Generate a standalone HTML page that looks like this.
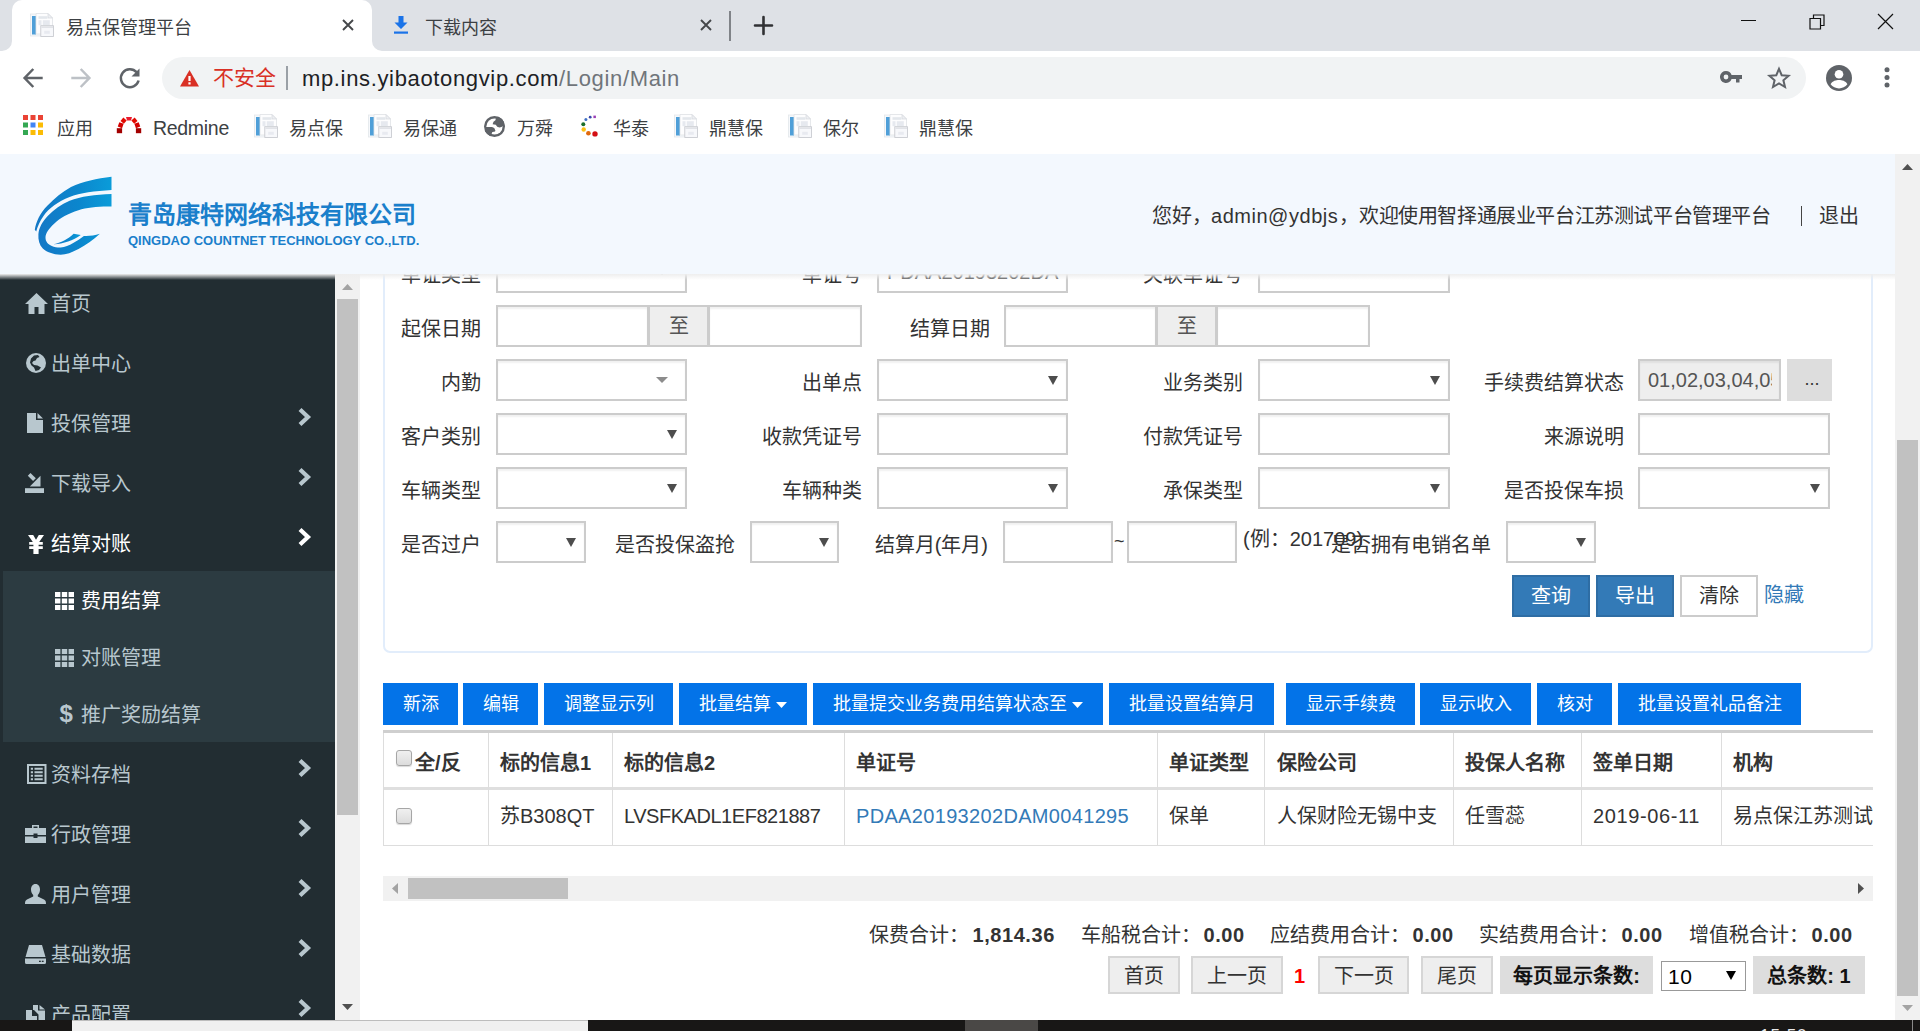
<!DOCTYPE html>
<html lang="zh-CN">
<head>
<meta charset="utf-8">
<title>易点保管理平台</title>
<style>
*{box-sizing:border-box;margin:0;padding:0}
html,body{width:1920px;height:1031px;overflow:hidden;background:#fff}
body{position:relative;font-family:"Liberation Sans",sans-serif;color:#333;font-size:20px}
.a{position:absolute;white-space:nowrap;line-height:1}
.t{position:absolute;white-space:nowrap;line-height:24px;height:24px}
svg{position:absolute;overflow:visible}
/* browser chrome */
#tabbar{left:0;top:0;width:1920px;height:51px;background:#dee1e6}
#tab1{left:12px;top:0;width:360px;height:51px;background:#fff;border-radius:10px 10px 0 0}
.tabtxt{font-size:18px;color:#3c4043;top:15.5px}
#toolbar{left:0;top:51px;width:1920px;height:53px;background:#fff}
#pill{left:162px;top:57px;width:1644px;height:42px;border-radius:21px;background:#f1f3f4}
#bm{left:0;top:104px;width:1920px;height:50px;background:#fff}
.bmt{font-size:18px;color:#3c4043;top:116.5px}
/* page */
#hdr{left:0;top:154px;width:1895px;height:120px;background:#f3f8fe;z-index:5}
#hsh{left:0;top:274px;width:1895px;height:6px;background:linear-gradient(rgba(238,238,238,1),rgba(238,238,238,.55) 45%,rgba(238,238,238,0));z-index:6}
#side{left:0;top:274px;width:335px;height:746px;background:#222d32;overflow:hidden}
#sub{left:3px;top:297px;width:332px;height:171px;background:#2c3b41}
.mi{font-size:20px;color:#b8c7ce;left:51px}
.mi.w{color:#fff}
.si{font-size:20px;color:#b8c7ce;left:81px}
.si.w{color:#fff}
#sscroll{left:335px;top:274px;width:25px;height:746px;background:#f1f1f1}
#mscroll{left:1895px;top:154px;width:25px;height:866px;background:#f1f1f1}
#content{left:360px;top:274px;width:1535px;height:746px;background:#fff;overflow:hidden}
.lb{color:#333}
.b{font-weight:bold}
#task{left:0;top:1020px;width:1920px;height:11px;background:#181716}
</style>
</head>
<body>
<!-- ============ TAB BAR ============ -->
<div class="a" id="tabbar"></div>
<div class="a" id="tab1"></div>
<!-- inverse corners of active tab -->
<svg style="left:2px;top:41px" width="10" height="10"><path d="M10 0V10H0A10 10 0 0 0 10 0Z" fill="#fff"/></svg>
<svg style="left:372px;top:41px" width="10" height="10"><path d="M0 0V10H10A10 10 0 0 1 0 0Z" fill="#fff"/></svg>
<svg class="fav" style="left:30px;top:13px" width="24" height="24" viewBox="0 0 24 24"><use href="#favicon"/></svg>
<div class="a tabtxt" style="left:66px;line-height:24px">易点保管理平台</div>
<svg style="left:342px;top:19px" width="12" height="12" viewBox="0 0 12 12"><path d="M1 1L11 11M11 1L1 11" stroke="#45474a" stroke-width="1.9" fill="none"/></svg>
<svg style="left:394px;top:16px" width="14" height="18" viewBox="0 0 14 18"><path d="M4.5 0H9.5V6.5H13.5L7 13L.5 6.5H4.5Z" fill="#1a73e8"/><rect x="0" y="15.5" width="14" height="2.2" fill="#1a73e8"/></svg>
<div class="a tabtxt" style="left:425px;line-height:24px">下载内容</div>
<svg style="left:700px;top:19px" width="12" height="12" viewBox="0 0 12 12"><path d="M1 1L11 11M11 1L1 11" stroke="#45474a" stroke-width="1.9" fill="none"/></svg>
<div class="a" style="left:729px;top:11px;width:1.5px;height:30px;background:#808388"></div>
<svg style="left:754px;top:16px" width="19" height="19" viewBox="0 0 19 19"><path d="M9.5 1V18M1 9.5H18" stroke="#303134" stroke-width="2.6" stroke-linecap="round" fill="none"/></svg>
<!-- window controls -->
<div class="a" style="left:1741px;top:20px;width:15px;height:1px;background:#111"></div>
<svg style="left:1808.5px;top:13.5px" width="16" height="16" viewBox="0 0 16 16"><path d="M1 4.500H11.500V15H1ZM4.500 4.500V1H15V11.500H11.500" stroke="#111" stroke-width="1.200" fill="none"/></svg>
<svg style="left:1878px;top:14px" width="15" height="15" viewBox="0 0 15 15"><path d="M0 0L15 15M15 0L0 15" stroke="#111" stroke-width="1.200" fill="none"/></svg>

<!-- ============ TOOLBAR ============ -->
<div class="a" id="toolbar"></div>
<div class="a" id="pill"></div>
<svg style="left:23px;top:68px" width="20" height="20" viewBox="0 0 20 20"><path d="M19.7 10H2.5M10.3 1L1.6 10L10.3 19" stroke="#5f6368" stroke-width="2.5" fill="none"/></svg>
<svg style="left:71px;top:68px" width="20" height="20" viewBox="0 0 20 20"><path d="M.3 10H17.5M9.7 1L18.4 10L9.700 19" stroke="#bdc1c6" stroke-width="2.5" fill="none"/></svg>
<svg style="left:119px;top:67px" width="22" height="22" viewBox="0 0 22 22"><path d="M17.6 5.2A9 9 0 1 0 19.6 13.5" stroke="#5f6368" stroke-width="2.5" fill="none"/><path d="M20.5 1.5V9.5H12.5Z" fill="#5f6368"/></svg>
<svg style="left:180px;top:70px" width="19" height="17" viewBox="0 0 19 17"><path d="M9.5 0L19 16.5H0Z" fill="#d93025"/><rect x="8.4" y="6" width="2.2" height="5" fill="#fff"/><rect x="8.4" y="12.3" width="2.2" height="2.2" fill="#fff"/></svg>
<div class="a" style="left:213px;top:65px;line-height:26px;font-size:21px;color:#d93025">不安全</div>
<div class="a" style="left:286px;top:66px;width:1.6px;height:24px;background:#9aa0a6"></div>
<div class="a" id="url" style="left:302px;top:65px;line-height:28px;font-size:22px;letter-spacing:.65px;color:#202124">mp.ins.yibaotongvip.com<span style="color:#70757a">/Login/Main</span></div>
<!-- key -->
<svg style="left:1720px;top:71px" width="22" height="12" viewBox="0 0 22 12"><path d="M6 0A6 6 0 1 0 11.6 8H16V11.5H19.5V8H22V4H11.6A6 6 0 0 0 6 0ZM6 3.6A2.4 2.4 0 1 1 6 8.4A2.4 2.4 0 0 1 6 3.6Z" fill="#5f6368" fill-rule="evenodd"/></svg>
<!-- star -->
<svg style="left:1768px;top:67px" width="22" height="21" viewBox="0 0 22 21"><path d="M11 1.8L13.7 8.2L20.6 8.8L15.4 13.3L17 20L11 16.4L5 20L6.6 13.3L1.4 8.8L8.3 8.2Z" stroke="#5f6368" stroke-width="2" fill="none" stroke-linejoin="miter"/></svg>
<!-- avatar -->
<svg style="left:1826px;top:64.5px" width="26" height="26" viewBox="0 0 26 26"><circle cx="13" cy="13" r="13" fill="#5f6368"/><circle cx="13" cy="9.3" r="4.3" fill="#fff"/><path d="M4.6 19.2C6.5 15.8 10 15 13 15S19.5 15.8 21.4 19.2A10.5 10.5 0 0 1 4.6 19.2Z" fill="#fff"/></svg>
<svg style="left:1884px;top:67px" width="6" height="21" viewBox="0 0 6 21"><circle cx="3" cy="2.8" r="2.5" fill="#5f6368"/><circle cx="3" cy="10.4" r="2.5" fill="#5f6368"/><circle cx="3" cy="18" r="2.5" fill="#5f6368"/></svg>

<!-- ============ BOOKMARKS ============ -->
<div class="a" id="bm"></div>
<svg style="left:23px;top:115px" width="20" height="20" viewBox="0 0 20 20">
<rect x="0" y="0" width="5" height="5" fill="#ea4335"/><rect x="7.5" y="0" width="5" height="5" fill="#ea4335"/><rect x="15" y="0" width="5" height="5" fill="#ea4335"/>
<rect x="0" y="7.5" width="5" height="5" fill="#34a853"/><rect x="7.5" y="7.5" width="5" height="5" fill="#4285f4"/><rect x="15" y="7.5" width="5" height="5" fill="#fbbc05"/>
<rect x="0" y="15" width="5" height="5" fill="#34a853"/><rect x="7.5" y="15" width="5" height="5" fill="#fbbc05"/><rect x="15" y="15" width="5" height="5" fill="#fbbc05"/></svg>
<div class="a bmt" style="left:57px;line-height:24px">应用</div>
<svg style="left:116px;top:116px" width="26" height="18" viewBox="0 0 26 18">
<rect x=".8" y="12.200" width="5.300" height="5" fill="#a30000"/><rect x="19.900" y="12.200" width="5.300" height="5" fill="#a30000"/>
<rect x="-2.300" y="-2.300" width="4.600" height="4.600" fill="#d40000" transform="translate(4.700 9.200) rotate(20)"/><rect x="-2.300" y="-2.300" width="4.600" height="4.600" fill="#d40000" transform="translate(21.300 9.200) rotate(-20)"/>
<rect x="-2.200" y="-2.200" width="4.400" height="4.400" fill="#e10a00" transform="translate(7.600 4.700) rotate(40)"/><rect x="-2.200" y="-2.200" width="4.400" height="4.400" fill="#e10a00" transform="translate(18.400 4.700) rotate(-40)"/>
<path d="M10 1.100H16L15 4.600H11Z" fill="#ea1a2d"/></svg>
<div class="a bmt" style="left:153px;top:116px;line-height:24px;font-size:19.5px;letter-spacing:-.3px">Redmine</div>
<svg style="left:254px;top:114px" width="24" height="24" viewBox="0 0 24 24"><use href="#favicon"/></svg>
<div class="a bmt" style="left:289px;line-height:24px">易点保</div>
<svg style="left:368px;top:114px" width="24" height="24" viewBox="0 0 24 24"><use href="#favicon"/></svg>
<div class="a bmt" style="left:403px;line-height:24px">易保通</div>
<svg style="left:483.700px;top:115.500px" width="21" height="21" viewBox="0 0 21 21"><defs><clipPath id="gc"><circle cx="10.500" cy="10.500" r="10.500"/></clipPath></defs><circle cx="10.500" cy="10.500" r="10.500" fill="#5f6368"/><circle cx="10.500" cy="10.500" r="8.100" fill="#fff"/><g clip-path="url(#gc)" fill="#5f6368"><path d="M12.200 1.500L11.400 4.300Q9 5.400 8.600 8.300L11.800 8.800Q12.800 11.400 15.500 11.400Q17.600 11.300 19 10L21 10.500L19.500 3L14 .5Z"/><path d="M1 11H8Q10.800 11.400 11.400 14.400Q11.400 15.600 10 15.700L8.300 16Q7.300 17.500 7.800 19.500L6 20.500L1 16Z"/></g></svg>
<div class="a bmt" style="left:517px;line-height:24px">万舜</div>
<svg style="left:579px;top:115px" width="20" height="22" viewBox="0 0 20 22"><rect x="14.400" y=".6" width="2.500" height="2.500" fill="#9b3fb5"/><circle cx="11.200" cy="2.200" r="1.400" fill="#3949ab"/><circle cx="6.900" cy="4.400" r="1.500" fill="#3f6fc4"/><circle cx="4.300" cy="9.200" r="2" fill="#1b6e2c"/><circle cx="4.700" cy="14.500" r="2.200" fill="#fbc117"/><circle cx="9.400" cy="18.200" r="2.300" fill="#e0690c"/><circle cx="16" cy="18.900" r="2.700" fill="#d40f14"/></svg>
<div class="a bmt" style="left:613px;line-height:24px">华泰</div>
<svg style="left:674px;top:114px" width="24" height="24" viewBox="0 0 24 24"><use href="#favicon"/></svg>
<div class="a bmt" style="left:709px;line-height:24px">鼎慧保</div>
<svg style="left:788px;top:114px" width="24" height="24" viewBox="0 0 24 24"><use href="#favicon"/></svg>
<div class="a bmt" style="left:823px;line-height:24px">保尔</div>
<svg style="left:884px;top:114px" width="24" height="24" viewBox="0 0 24 24"><use href="#favicon"/></svg>
<div class="a bmt" style="left:919px;line-height:24px">鼎慧保</div>

<!-- favicon symbol -->
<svg width="0" height="0" style="left:-100px;top:-100px"><defs><g id="favicon">
<rect x="0.5" y="1" width="16" height="22" fill="#f6f8fb" stroke="#e3e6ea" stroke-width=".8"/>
<rect x="2" y="3" width="4" height="18.5" fill="#4f9fd8"/>
<path d="M6 0.5H18L22.5 5V21H6Z" fill="#fdfdfe" stroke="#dfe2e6" stroke-width=".8"/>
<path d="M18 0.5V5H22.5Z" fill="#eef0f3" stroke="#d4d7dc" stroke-width=".7"/>
<rect x="8.5" y="3.2" width="9" height="2.6" fill="#e3e7ec"/>
<rect x="8.5" y="7.2" width="3" height="5" fill="#e6e9ef"/><rect x="12.8" y="7.2" width="7" height="5" fill="#e6e9ef"/>
<rect x="10.8" y="12.7" width="12.7" height="10.8" fill="#f7f8fb" stroke="#c6c8ce" stroke-width=".85"/>
<rect x="11.3" y="13.2" width="11.7" height="1.8" fill="#e1e3e8"/>
<rect x="14.2" y="17.8" width="5.6" height="3" fill="#e8eaf0"/>
</g></defs></svg>

<!-- ============ PAGE HEADER ============ -->
<div class="a" id="hdr">
<svg style="left:25px;top:16px" width="100" height="92" viewBox="0 0 100 92">
<defs><linearGradient id="lg" x1="0" y1="0" x2="1" y2="0"><stop offset="0" stop-color="#1478c6"/><stop offset=".55" stop-color="#0b86cd"/><stop offset="1" stop-color="#0a9cd9"/></linearGradient></defs>
<path d="M86.5 6.7V20.1C70 21 55 23 44.6 27C33 31.500 24 38 18.500 46C15 51 12.500 56.500 11.200 61.500L9.800 59.800C11 52 15 43 22.300 35.700C30 28 37 22 46 17C58 11.500 72 8.500 86.500 6.700Z" fill="url(#lg)"/>
<path d="M86.5 24.100V36.600C74 36.300 62 37.500 53.500 40.300C43 43.500 35 48 29.400 53.500C24 58.500 20.500 63 20.500 67.800C20.500 71.500 23 74.500 26.800 76C29.500 77.200 32.500 77.700 35.700 77.600C40 77.300 44 75.500 48.200 73.100C52 71 55.500 68.500 58.900 66C64 66.300 69.500 65.500 74.900 63.800C68 70 61 75 53.500 79C47 82.500 41 84.700 35.700 84.700C28 84.500 21.500 82 17.800 78.500C14.500 75 13 70 13.400 64.200C14 57.500 17.500 51.500 23.200 45.500C29 39.500 36 34.500 44.600 30.800C56 26.500 70 24.600 86.500 24.100Z" fill="url(#lg)"/>
<path d="M48.600 63.800L55.800 65.100C48 70.500 39 74 28.100 74.300C36 73 43 69 48.600 63.800Z" fill="url(#lg)"/>
</svg>
<div class="a" style="left:128px;top:46px;line-height:30px;font-size:24px;font-weight:bold;color:#1a7fcb;letter-spacing:0">青岛康特网络科技有限公司</div>
<div class="a" id="eng" style="left:128px;top:79px;line-height:16px;font-size:13px;font-weight:bold;color:#1a7fcb">QINGDAO COUNTNET TECHNOLOGY CO.,LTD.</div>
<div class="a" style="left:1152px;top:50px;line-height:24px;font-size:20px;color:#333">您好，</div>
<div class="a" id="adm" style="left:1211px;top:50px;line-height:24px;font-size:20px;letter-spacing:.53px;color:#333">admin@ydbjs</div>
<div class="a" style="left:1339px;top:50px;line-height:24px;font-size:20px;color:#333">，</div><div class="a" style="left:1359px;top:50px;line-height:24px;font-size:20px;color:#333;letter-spacing:-.4px">欢迎使用智择通展业平台江苏测试平台管理平台</div>
<div class="a" style="left:1801px;top:52px;width:1px;height:20px;background:#444"></div>
<div class="a" style="left:1819px;top:50px;line-height:24px;font-size:20px;color:#333">退出</div>
</div>
<div class="a" id="side"><svg style="left:25px;top:29px;margin-top:-10px" width="23" height="21" viewBox="0 0 23 21"><path d="M11.500 0L23 11H19.500V21H13.500V14H9.500V21H3.500V11H0Z" fill="#b8c7ce"/></svg><div class="a mi" style="top:18px;line-height:24px">首页</div><svg style="left:25.500px;top:89px;margin-top:-10px" width="20" height="20" viewBox="0 0 20 20"><circle cx="10" cy="10" r="10" fill="#b8c7ce"/><path d="M8 2.500L12 2L13.500 4L11 5L9.500 7.500L7.500 8L6 10L8 12L11.500 12.500L15 14.500L13 17L9.500 18L8 14.500L5.500 12.500L4 9.500L5 5.500Z" fill="#222d32"/></svg><div class="a mi" style="top:78px;line-height:24px">出单中心</div><svg style="left:27px;top:149px;margin-top:-10px" width="16" height="20" viewBox="0 0 16 20"><path d="M0 0H9V7H16V20H0Z" fill="#b8c7ce"/><path d="M10.500 0L16 5.500H10.500Z" fill="#b8c7ce"/></svg><div class="a mi" style="top:138px;line-height:24px">投保管理</div><svg style="left:297px;top:134px" width="14" height="18" viewBox="0 0 14 18"><path d="M3 1.500L11 9L3 16.500" stroke="#b8c7ce" stroke-width="4.200" fill="none"/></svg><svg style="left:25px;top:209px;margin-top:-10px" width="19" height="20" viewBox="0 0 19 20"><path d="M0 15.200H19V20H0Z" fill="#b8c7ce"/><path d="M2.800 2.700L5.500 0L10.800 5.300L8.100 8Z" fill="#b8c7ce"/><path d="M15.500 2.800V13.500H4.800Z" fill="#b8c7ce"/></svg><div class="a mi" style="top:198px;line-height:24px">下载导入</div><svg style="left:297px;top:194px" width="14" height="18" viewBox="0 0 14 18"><path d="M3 1.500L11 9L3 16.500" stroke="#b8c7ce" stroke-width="4.200" fill="none"/></svg><div class="a" id="sub"></div><svg style="left:27.500px;top:269px;margin-top:-8px" width="16" height="19" viewBox="0 0 16 19"><path d="M0 0H5.200L8 4.800L10.800 0H16L11.200 7H14.800V9.800H10.600V11.200H14.800V14H10.600V19H5.400V14H1.200V11.200H5.400V9.800H1.200V7H4.800Z" fill="#fff"/></svg><div class="a mi w" style="top:258px;line-height:24px">结算对账</div><svg style="left:297px;top:254px" width="14" height="18" viewBox="0 0 14 18"><path d="M3 1.500L11 9L3 16.500" stroke="#fff" stroke-width="4.200" fill="none"/></svg><svg style="left:55px;top:327px;margin-top:-9px" width="19" height="18" viewBox="0 0 19 18"><path d="M0 0H5.400V5H0ZM6.800 0H12.200V5H6.800ZM13.600 0H19V5H13.600ZM0 6.500H5.400V11.500H0ZM6.800 6.500H12.200V11.500H6.800ZM13.600 6.500H19V11.500H13.600ZM0 13H5.400V18H0ZM6.800 13H12.200V18H6.800ZM13.600 13H19V18H13.600Z" fill="#fff"/></svg><div class="a si w" style="top:315px;line-height:24px">费用结算</div><svg style="left:55px;top:384px;margin-top:-9px" width="19" height="18" viewBox="0 0 19 18"><path d="M0 0H5.400V5H0ZM6.800 0H12.200V5H6.800ZM13.600 0H19V5H13.600ZM0 6.500H5.400V11.500H0ZM6.800 6.500H12.200V11.500H6.800ZM13.600 6.500H19V11.500H13.600ZM0 13H5.400V18H0ZM6.800 13H12.200V18H6.800ZM13.600 13H19V18H13.600Z" fill="#b8c7ce"/></svg><div class="a si" style="top:372px;line-height:24px">对账管理</div><div class="a" style="left:59.500px;top:440px;margin-top:-12px;line-height:24px;font-size:24px;font-weight:bold;color:#b8c7ce">$</div><div class="a si" style="top:429px;line-height:24px">推广奖励结算</div><svg style="left:26.500px;top:500px;margin-top:-10px" width="19.500" height="20" viewBox="0 0 19.500 20"><path d="M0 0H19.500V20H0ZM2 2V18H17.500V2Z" fill="#b8c7ce" fill-rule="evenodd"/><path d="M3.800 3.800H6V5.800H3.800ZM7.500 3.800H15.700V5.800H7.500ZM3.800 7.300H6V9.300H3.800ZM7.500 7.300H15.700V9.300H7.500ZM3.800 10.800H6V12.800H3.800ZM7.500 10.800H15.700V12.800H7.500ZM3.800 14.300H6V16.300H3.800ZM7.500 14.300H15.700V16.300H7.500Z" fill="#b8c7ce"/></svg><div class="a mi" style="top:489px;line-height:24px">资料存档</div><svg style="left:297px;top:485px" width="14" height="18" viewBox="0 0 14 18"><path d="M3 1.500L11 9L3 16.500" stroke="#b8c7ce" stroke-width="4.200" fill="none"/></svg><svg style="left:25px;top:560px;margin-top:-9px" width="21" height="18" viewBox="0 0 21 18"><path d="M7 0H14V3H21V10H12.500V8.500H8.500V10H0V3H7ZM8.500 1.500V3H12.500V1.500ZM0 11.500H8.500V13H12.500V11.500H21V18H0Z" fill="#b8c7ce" fill-rule="evenodd"/></svg><div class="a mi" style="top:549px;line-height:24px">行政管理</div><svg style="left:297px;top:545px" width="14" height="18" viewBox="0 0 14 18"><path d="M3 1.500L11 9L3 16.500" stroke="#b8c7ce" stroke-width="4.200" fill="none"/></svg><svg style="left:25px;top:620px;margin-top:-10px" width="21" height="20" viewBox="0 0 21 20"><path d="M10.500 0C13.500 0 15 2.500 15 5.500C15 8 14 10 12.800 11V12.500L19 15.500C20.500 16.300 21 17.500 21 20H0C0 17.500 0.500 16.300 2 15.500L8.200 12.500V11C7 10 6 8 6 5.500C6 2.500 7.500 0 10.500 0Z" fill="#b8c7ce"/></svg><div class="a mi" style="top:609px;line-height:24px">用户管理</div><svg style="left:297px;top:605px" width="14" height="18" viewBox="0 0 14 18"><path d="M3 1.500L11 9L3 16.500" stroke="#b8c7ce" stroke-width="4.200" fill="none"/></svg><svg style="left:25px;top:680px;margin-top:-9px" width="21" height="19" viewBox="0 0 21 19"><path d="M4 0H17L20.500 12H0.500ZM0 13.500H21V17.500A1.500 1.500 0 0 1 19.500 19H1.500A1.500 1.500 0 0 1 0 17.500Z" fill="#b8c7ce"/><rect x="14" y="15.700" width="1.800" height="1.300" fill="#222d32"/><rect x="16.800" y="15.700" width="1.800" height="1.300" fill="#222d32"/></svg><div class="a mi" style="top:669px;line-height:24px">基础数据</div><svg style="left:297px;top:665px" width="14" height="18" viewBox="0 0 14 18"><path d="M3 1.500L11 9L3 16.500" stroke="#b8c7ce" stroke-width="4.200" fill="none"/></svg><svg style="left:26px;top:740px;margin-top:-9px" width="19" height="20" viewBox="0 0 19 20"><path d="M0 5H6V11H11V20H0ZM7 0H12V5.500H19V16H12.500V9.500L8 5L7 5ZM13.500 0L19 4.500H13.500Z" fill="#b8c7ce"/></svg><div class="a mi" style="top:729px;line-height:24px">产品配置</div><svg style="left:297px;top:725px" width="14" height="18" viewBox="0 0 14 18"><path d="M3 1.500L11 9L3 16.500" stroke="#b8c7ce" stroke-width="4.200" fill="none"/></svg></div>
<div class="a" id="sscroll">
<svg style="left:7px;top:10px" width="11" height="6"><path d="M0 6L5.500 0L11 6Z" fill="#a3a3a3"/></svg>
<div class="a" style="left:2px;top:25px;width:21px;height:516px;background:#c1c1c1"></div>
<svg style="left:7px;top:730px" width="11" height="6"><path d="M0 0L5.500 6L11 0Z" fill="#505050"/></svg>
</div>
<div class="a" id="content">
<div class="a" style="left:23px;top:-49px;width:1490px;height:428px;border:2px solid #e2edfb;border-radius:7px;background:#fff"></div>
<div class="t lb" style="right:1414px;top:-11.5px;">单证类型</div>
<div class="a" style="left:136px;top:-23px;width:191px;height:42px;border:2px solid #ccc;background:#fff;box-shadow:inset 0 2px 2px rgba(0,0,0,.06);"></div>
<svg style="left:296px;top:-5px" width="12" height="6"><path d="M0 0H12L6 6Z" fill="#8c8c8c"/></svg>
<div class="t lb" style="right:1033px;top:-11.5px;">单证号</div>
<div class="a" style="left:517px;top:-23px;width:191px;height:42px;border:2px solid #ccc;background:#fff;box-shadow:inset 0 2px 2px rgba(0,0,0,.06);"></div>
<div class="t lat" style="left:527px;top:-14px;color:#555">PDAA20193202DA</div>
<div class="t lb" style="right:652px;top:-11.5px;">关联单证号</div>
<div class="a" style="left:898px;top:-23px;width:192px;height:42px;border:2px solid #ccc;background:#fff;box-shadow:inset 0 2px 2px rgba(0,0,0,.06);"></div>
<div class="t lb" style="right:1414px;top:42.5px;">起保日期</div>
<div class="a" style="left:136px;top:31px;width:153px;height:42px;border:2px solid #ccc;background:#fff;box-shadow:inset 0 2px 2px rgba(0,0,0,.06);"></div>
<div class="a" style="left:288px;top:31px;width:61px;height:42px;border:2px solid #ccc;background:#eee"></div>
<div class="t " style="left:309px;top:40px;color:#555">至</div>
<div class="a" style="left:348px;top:31px;width:154px;height:42px;border:2px solid #ccc;background:#fff;box-shadow:inset 0 2px 2px rgba(0,0,0,.06);"></div>
<div class="t lb" style="right:905px;top:42.5px;">结算日期</div>
<div class="a" style="left:644px;top:31px;width:153px;height:42px;border:2px solid #ccc;background:#fff;box-shadow:inset 0 2px 2px rgba(0,0,0,.06);"></div>
<div class="a" style="left:796px;top:31px;width:61px;height:42px;border:2px solid #ccc;background:#eee"></div>
<div class="t " style="left:817px;top:40px;color:#555">至</div>
<div class="a" style="left:856px;top:31px;width:154px;height:42px;border:2px solid #ccc;background:#fff;box-shadow:inset 0 2px 2px rgba(0,0,0,.06);"></div>
<div class="t lb" style="right:1414px;top:96.5px;">内勤</div>
<div class="a" style="left:136px;top:85px;width:191px;height:42px;border:2px solid #ccc;background:#fff;box-shadow:inset 0 2px 2px rgba(0,0,0,.06);"></div>
<svg style="left:296px;top:103px" width="12" height="6"><path d="M0 0H12L6 6Z" fill="#8c8c8c"/></svg>
<div class="t lb" style="right:1033px;top:96.5px;">出单点</div>
<div class="a" style="left:517px;top:85px;width:191px;height:42px;border:2px solid #ccc;background:#fff;box-shadow:inset 0 2px 2px rgba(0,0,0,.06);"></div>
<svg style="left:688px;top:102px" width="10" height="9"><path d="M0 0H10L5 9Z" fill="#4d4d4d"/></svg>
<div class="t lb" style="right:652px;top:96.5px;">业务类别</div>
<div class="a" style="left:898px;top:85px;width:192px;height:42px;border:2px solid #ccc;background:#fff;box-shadow:inset 0 2px 2px rgba(0,0,0,.06);"></div>
<svg style="left:1070px;top:102px" width="10" height="9"><path d="M0 0H10L5 9Z" fill="#4d4d4d"/></svg>
<div class="t lb" style="right:271px;top:96.5px;">手续费结算状态</div>
<div class="a" style="left:1278px;top:85px;width:143px;height:42px;border:2px solid #ccc;background:#fff;box-shadow:inset 0 2px 2px rgba(0,0,0,.06);background:#eee;overflow:hidden"></div>
<div class="t lat" id="feeval" style="left:1288px;top:94px;color:#555;width:124px;overflow:hidden">01,02,03,04,05</div>
<div class="a" style="left:1427px;top:85px;width:45px;height:42px;background:#ddd"></div>
<div class="t " style="left:1444.5px;top:93px;color:#333;font-size:18px">...</div>
<div class="t lb" style="right:1414px;top:150.5px;">客户类别</div>
<div class="a" style="left:136px;top:139px;width:191px;height:42px;border:2px solid #ccc;background:#fff;box-shadow:inset 0 2px 2px rgba(0,0,0,.06);"></div>
<svg style="left:307px;top:156px" width="10" height="9"><path d="M0 0H10L5 9Z" fill="#4d4d4d"/></svg>
<div class="t lb" style="right:1033px;top:150.5px;">收款凭证号</div>
<div class="a" style="left:517px;top:139px;width:191px;height:42px;border:2px solid #ccc;background:#fff;box-shadow:inset 0 2px 2px rgba(0,0,0,.06);"></div>
<div class="t lb" style="right:652px;top:150.5px;">付款凭证号</div>
<div class="a" style="left:898px;top:139px;width:192px;height:42px;border:2px solid #ccc;background:#fff;box-shadow:inset 0 2px 2px rgba(0,0,0,.06);"></div>
<div class="t lb" style="right:271px;top:150.5px;">来源说明</div>
<div class="a" style="left:1278px;top:139px;width:192px;height:42px;border:2px solid #ccc;background:#fff;box-shadow:inset 0 2px 2px rgba(0,0,0,.06);"></div>
<div class="t lb" style="right:1414px;top:204.5px;">车辆类型</div>
<div class="a" style="left:136px;top:193px;width:191px;height:42px;border:2px solid #ccc;background:#fff;box-shadow:inset 0 2px 2px rgba(0,0,0,.06);"></div>
<svg style="left:307px;top:210px" width="10" height="9"><path d="M0 0H10L5 9Z" fill="#4d4d4d"/></svg>
<div class="t lb" style="right:1033px;top:204.5px;">车辆种类</div>
<div class="a" style="left:517px;top:193px;width:191px;height:42px;border:2px solid #ccc;background:#fff;box-shadow:inset 0 2px 2px rgba(0,0,0,.06);"></div>
<svg style="left:688px;top:210px" width="10" height="9"><path d="M0 0H10L5 9Z" fill="#4d4d4d"/></svg>
<div class="t lb" style="right:652px;top:204.5px;">承保类型</div>
<div class="a" style="left:898px;top:193px;width:192px;height:42px;border:2px solid #ccc;background:#fff;box-shadow:inset 0 2px 2px rgba(0,0,0,.06);"></div>
<svg style="left:1070px;top:210px" width="10" height="9"><path d="M0 0H10L5 9Z" fill="#4d4d4d"/></svg>
<div class="t lb" style="right:271px;top:204.5px;">是否投保车损</div>
<div class="a" style="left:1278px;top:193px;width:192px;height:42px;border:2px solid #ccc;background:#fff;box-shadow:inset 0 2px 2px rgba(0,0,0,.06);"></div>
<svg style="left:1450px;top:210px" width="10" height="9"><path d="M0 0H10L5 9Z" fill="#4d4d4d"/></svg>
<div class="t lb" style="right:1414px;top:258.5px;">是否过户</div>
<div class="a" style="left:136px;top:247px;width:90px;height:42px;border:2px solid #ccc;background:#fff;box-shadow:inset 0 2px 2px rgba(0,0,0,.06);"></div>
<svg style="left:206px;top:264px" width="10" height="9"><path d="M0 0H10L5 9Z" fill="#4d4d4d"/></svg>
<div class="t lb" style="right:1160px;top:258.5px;">是否投保盗抢</div>
<div class="a" style="left:390px;top:247px;width:89px;height:42px;border:2px solid #ccc;background:#fff;box-shadow:inset 0 2px 2px rgba(0,0,0,.06);"></div>
<svg style="left:459px;top:264px" width="10" height="9"><path d="M0 0H10L5 9Z" fill="#4d4d4d"/></svg>
<div class="t lb" id="jsy" style="right:907px;top:258.5px;">结算月(年月)</div>
<div class="a" style="left:643px;top:247px;width:110px;height:42px;border:2px solid #ccc;background:#fff;box-shadow:inset 0 2px 2px rgba(0,0,0,.06);"></div>
<div class="t " style="left:754px;top:255px;color:#333;font-size:18px">~</div>
<div class="a" style="left:767px;top:247px;width:110px;height:42px;border:2px solid #ccc;background:#fff;box-shadow:inset 0 2px 2px rgba(0,0,0,.06);"></div>
<div class="t " id="eg" style="left:883px;top:253px;">(例：201709)</div>
<div class="t lb" style="right:404px;top:258.5px;">是否拥有电销名单</div>
<div class="a" style="left:1146px;top:247px;width:90px;height:42px;border:2px solid #ccc;background:#fff;box-shadow:inset 0 2px 2px rgba(0,0,0,.06);"></div>
<svg style="left:1216px;top:264px" width="10" height="9"><path d="M0 0H10L5 9Z" fill="#4d4d4d"/></svg>
<div class="a" style="left:1152px;top:301px;width:78px;height:42px;background:#337ab7;border:2px solid #2e6da4;color:#fff;font-size:20px;text-align:center;line-height:38px">查询</div>
<div class="a" style="left:1236px;top:301px;width:78px;height:42px;background:#337ab7;border:2px solid #2e6da4;color:#fff;font-size:20px;text-align:center;line-height:38px">导出</div>
<div class="a" style="left:1320px;top:301px;width:78px;height:42px;background:#fff;border:2px solid #ccc;color:#333;font-size:20px;text-align:center;line-height:38px">清除</div>
<div class="t " style="left:1404px;top:309px;color:#337ab7">隐藏</div>
<div class="a" style="left:23px;top:409px;width:75px;height:42px;background:#0373e8;color:#fff;font-size:18px;line-height:42px;text-align:center">新添</div>
<div class="a" style="left:103px;top:409px;width:75px;height:42px;background:#0373e8;color:#fff;font-size:18px;line-height:42px;text-align:center">编辑</div>
<div class="a" style="left:184px;top:409px;width:129px;height:42px;background:#0373e8;color:#fff;font-size:18px;line-height:42px;text-align:center">调整显示列</div>
<div class="a" style="left:319px;top:409px;width:128px;height:42px;background:#0373e8;color:#fff;font-size:18px;line-height:42px;text-align:center"><span style="margin-right:16px">批量结算</span></div>
<svg style="left:416px;top:428px" width="11" height="6"><path d="M0 0H11L5.5 6Z" fill="#fff"/></svg>
<div class="a" style="left:453px;top:409px;width:290px;height:42px;background:#0373e8;color:#fff;font-size:18px;line-height:42px;text-align:center"><span style="margin-right:16px">批量提交业务费用结算状态至</span></div>
<svg style="left:712px;top:428px" width="11" height="6"><path d="M0 0H11L5.5 6Z" fill="#fff"/></svg>
<div class="a" style="left:749px;top:409px;width:165px;height:42px;background:#0373e8;color:#fff;font-size:18px;line-height:42px;text-align:center">批量设置结算月</div>
<div class="a" style="left:926px;top:409px;width:129px;height:42px;background:#0373e8;color:#fff;font-size:18px;line-height:42px;text-align:center">显示手续费</div>
<div class="a" style="left:1060px;top:409px;width:111px;height:42px;background:#0373e8;color:#fff;font-size:18px;line-height:42px;text-align:center">显示收入</div>
<div class="a" style="left:1177px;top:409px;width:75px;height:42px;background:#0373e8;color:#fff;font-size:18px;line-height:42px;text-align:center">核对</div>
<div class="a" style="left:1258px;top:409px;width:183px;height:42px;background:#0373e8;color:#fff;font-size:18px;line-height:42px;text-align:center">批量设置礼品备注</div>
<div class="a" style="left:23px;top:456px;width:1490px;height:3px;background:#cfcfcf"></div>
<div class="a" style="left:23px;top:513px;width:1490px;height:3px;background:#dfdfdf"></div>
<div class="a" style="left:23px;top:570.5px;width:1490px;height:1px;background:#ddd"></div>
<div class="a" style="left:23px;top:459px;width:1px;height:112px;background:#ddd"></div>
<div class="a" style="left:128px;top:459px;width:1px;height:112px;background:#ddd"></div>
<div class="a" style="left:252px;top:459px;width:1px;height:112px;background:#ddd"></div>
<div class="a" style="left:484px;top:459px;width:1px;height:112px;background:#ddd"></div>
<div class="a" style="left:797px;top:459px;width:1px;height:112px;background:#ddd"></div>
<div class="a" style="left:904px;top:459px;width:1px;height:112px;background:#ddd"></div>
<div class="a" style="left:1093px;top:459px;width:1px;height:112px;background:#ddd"></div>
<div class="a" style="left:1221px;top:459px;width:1px;height:112px;background:#ddd"></div>
<div class="a" style="left:1361px;top:459px;width:1px;height:112px;background:#ddd"></div>
<div class="a" style="left:36px;top:475.5px;width:16px;height:16px;border:1.5px solid #a6a6a6;border-radius:3px;background:linear-gradient(#f0f0f0,#dcdcdc);box-shadow:0 1px 1px rgba(0,0,0,.15)"></div>
<div class="t b" id="qf" style="left:55px;top:477px;">全/反</div>
<div class="a" style="left:36px;top:534px;width:16px;height:16px;border:1.5px solid #a6a6a6;border-radius:3px;background:linear-gradient(#f0f0f0,#dcdcdc);box-shadow:0 1px 1px rgba(0,0,0,.15)"></div>
<div class="t b" style="left:140px;top:477px;">标的信息1</div>
<div class="t b" style="left:264px;top:477px;">标的信息2</div>
<div class="t b" style="left:496px;top:477px;">单证号</div>
<div class="t b" style="left:809px;top:477px;">单证类型</div>
<div class="t b" style="left:917px;top:477px;">保险公司</div>
<div class="t b" style="left:1105px;top:477px;">投保人名称</div>
<div class="t b" style="left:1233px;top:477px;">签单日期</div>
<div class="t b" style="left:1373px;top:477px;">机构</div>
<div class="t lat" id="c0" style="left:140px;top:530px;">苏B308QT</div>
<div class="t lat" id="c1" style="left:264px;top:530px;letter-spacing:-.46px">LVSFKADL1EF821887</div>
<div class="t lat" id="c2" style="left:496px;top:530px;color:#337ab7;letter-spacing:.33px">PDAA20193202DAM0041295</div>
<div class="t lat" id="c3" style="left:809px;top:530px;">保单</div>
<div class="t lat" id="c4" style="left:917px;top:530px;">人保财险无锡中支</div>
<div class="t lat" id="c5" style="left:1105px;top:530px;">任雪蕊</div>
<div class="t lat" id="c6" style="left:1233px;top:530px;letter-spacing:.62px">2019-06-11</div>
<div class="t lat" id="c7" style="left:1373px;top:530px;width:140px;overflow:hidden">易点保江苏测试平台</div>
<div class="a" style="left:23px;top:602px;width:1490px;height:25px;background:#f1f1f1"></div>
<div class="a" style="left:48px;top:604px;width:160px;height:21px;background:#c1c1c1"></div>
<svg style="left:32px;top:609px" width="6" height="11"><path d="M6 0V11L0 5.5Z" fill="#a3a3a3"/></svg>
<svg style="left:1498px;top:609px" width="6" height="11"><path d="M0 0V11L6 5.5Z" fill="#505050"/></svg>
<div class="t " style="left:509px;top:649px;">保费合计：</div>
<div class="t b lat" id="v0" style="left:612.5px;top:649px;letter-spacing:.56px">1,814.36</div>
<div class="t " style="left:720.5px;top:649px;">车船税合计：</div>
<div class="t b lat" id="v1" style="left:843.5px;top:649px;letter-spacing:.56px">0.00</div>
<div class="t " style="left:910px;top:649px;">应结费用合计：</div>
<div class="t b lat" id="v2" style="left:1052.5px;top:649px;letter-spacing:.56px">0.00</div>
<div class="t " style="left:1119px;top:649px;">实结费用合计：</div>
<div class="t b lat" id="v3" style="left:1261.5px;top:649px;letter-spacing:.56px">0.00</div>
<div class="t " style="left:1329px;top:649px;">增值税合计：</div>
<div class="t b lat" id="v4" style="left:1451.5px;top:649px;letter-spacing:.56px">0.00</div>
<div class="a" style="left:748px;top:682px;width:72px;height:38px;background:#eee;border:2px solid #d6d6d6;font-size:20px;line-height:37px;text-align:center;color:#333">首页</div>
<div class="a" style="left:831px;top:682px;width:92px;height:38px;background:#eee;border:2px solid #d6d6d6;font-size:20px;line-height:37px;text-align:center;color:#333">上一页</div>
<div class="a" style="left:958px;top:682px;width:91px;height:38px;background:#eee;border:2px solid #d6d6d6;font-size:20px;line-height:37px;text-align:center;color:#333">下一页</div>
<div class="a" style="left:1061px;top:682px;width:72px;height:38px;background:#eee;border:2px solid #d6d6d6;font-size:20px;line-height:37px;text-align:center;color:#333">尾页</div>
<div class="t b" style="left:934px;top:690px;color:#f00">1</div>
<div class="a" style="left:1140px;top:682px;width:153px;height:38px;background:#ddd;font-weight:bold;font-size:20px;line-height:41px;text-align:center;color:#111">每页显示条数:</div>
<div class="a" style="left:1301px;top:686.5px;width:85px;height:30px;border:1.5px solid #999;background:#fff"></div>
<div class="t b2" style="left:1308px;top:690.5px;color:#000;font-size:21px;letter-spacing:.5px">10</div>
<svg style="left:1366px;top:697px" width="10" height="9"><path d="M0 0H10L5 9Z" fill="#000"/></svg>
<div class="a" style="left:1393px;top:682px;width:112px;height:38px;background:#ddd;font-weight:bold;font-size:20px;line-height:41px;text-align:center;color:#111">总条数: 1</div>
</div><!--/content-->
<div class="a" id="mscroll">
<svg style="left:7px;top:10px" width="11" height="6"><path d="M0 6L5.500 0L11 6Z" fill="#505050"/></svg>
<div class="a" style="left:2px;top:286px;width:21px;height:556px;background:#c1c1c1"></div>
<svg style="left:7px;top:851px" width="11" height="6"><path d="M0 0L5.500 6L11 0Z" fill="#a3a3a3"/></svg>
</div>
<div class="a" id="hsh"></div>
<div class="a" id="task">
<div class="a" style="left:72px;top:0;width:516px;height:11px;background:#f0f0f0;border-top:1px solid #bdbdbd"></div>
<div class="a" style="left:965px;top:0;width:73px;height:11px;background:#4a4846"></div>
<div class="a" style="left:1912px;top:0;width:1px;height:11px;background:#8a8a8a"></div>
<div class="a" style="left:1760px;top:6.5px;font-size:17px;color:#e8e8e8;line-height:17px;letter-spacing:1px">15:50</div>
</div>
</body>
</html>
